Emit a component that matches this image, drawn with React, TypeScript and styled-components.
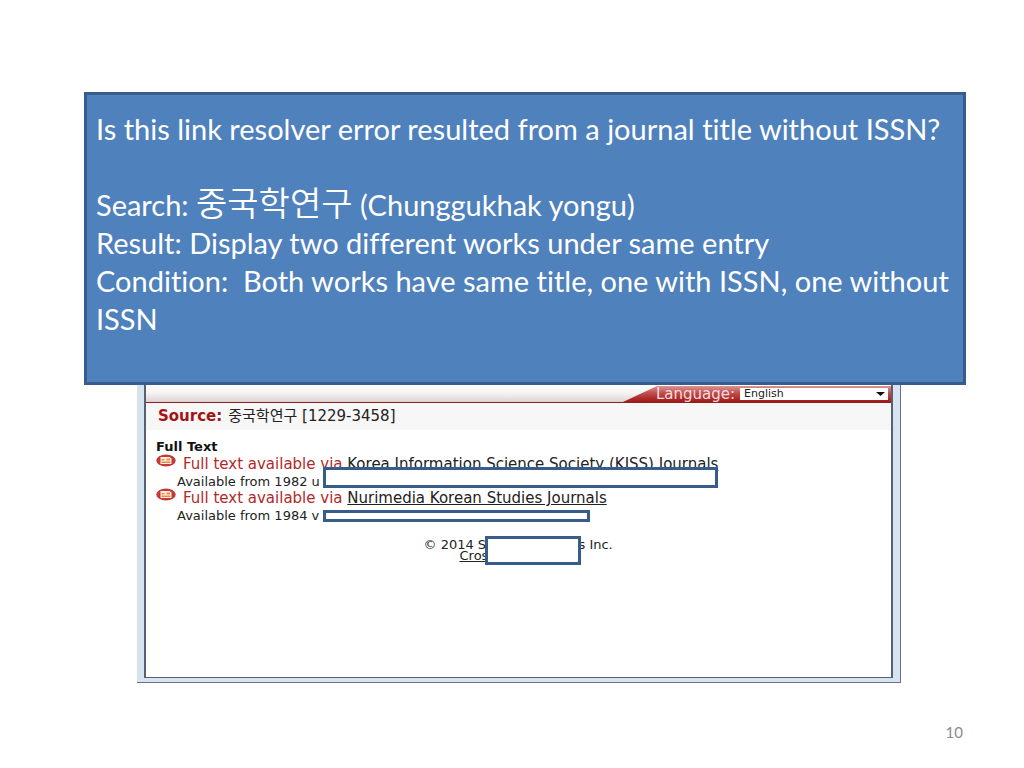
import React from "react";
import styled, { createGlobalStyle } from "styled-components";

const Global = createGlobalStyle`
  * { box-sizing: border-box; }
  body { margin: 0; background: #fff; }
  p, h1, h2 { margin: 0; }
`;

const Slide = styled.main`
  min-height: 100vh;
  padding: 92px 58px 25px 84px;
  display: flex;
  flex-direction: column;
  font-family: Lato, "Noto Sans CJK KR", sans-serif;
`;

const Callout = styled.section`
  min-height: 293px;
  padding: 15px 8px 30px 9px;
  border: 3px solid #385d8a;
  background: #4f81bd;
  color: #fff;
  font-size: 29px;
  font-variant-ligatures: none;
  line-height: 38px;
`;

const CalloutLine = styled.p`
  min-height: 38px;
  white-space: pre-wrap;
`;

const Hangul = styled.span`
  font-family: "Noto Sans CJK KR", sans-serif;
  font-size: 34px;
  font-weight: 350;
  line-height: 0;
`;

const Frame = styled.section`
  margin: 0 65px 0 53px;
  padding: 0 7px 4px;
  background: #d6e4f1;
  border: solid #6c7089;
  border-width: 0 1px 1px 0;
`;

const Page = styled.div`
  height: 293px;
  border: solid #59616e;
  border-width: 0 2px 1px;
  background: #fff;
  color: #222;
  font-family: "DejaVu Sans", "Noto Sans CJK KR", sans-serif;
`;

const TopBar = styled.header`
  height: 18px;
  padding-top: 1px;
  display: flex;
  justify-content: flex-end;
  border-bottom: 1px solid #8f2020;
  background: linear-gradient(#fff, #f5f1f1 50%, #ddd2d2);
`;

const LanguageTab = styled.label`
  width: 268px;
  padding: 0 3px 0 33px;
  display: flex;
  align-items: center;
  justify-content: space-between;
  background: linear-gradient(#dc9494, #c04c4c 45%, #a01818);
  clip-path: polygon(34px 0, 100% 0, 100% 100%, 0 100%);
  color: #f8dede;
  font-size: 15px;
  line-height: 16px;
`;

const SelectBox = styled.span`
  width: 148px;
  height: 12px;
  display: flex;
  align-items: center;
  background: #fff;
  padding-right: 3px;
`;

const Select = styled.select`
  flex: 1;
  height: 14px;
  padding: 0 4px;
  border: 0;
  appearance: none;
  background: transparent;
  color: #222;
  font: 11px/14px "DejaVu Sans", sans-serif;
`;

const Source = styled.h2`
  height: 27px;
  padding-left: 12px;
  background: #f7f7f7;
  font-size: 15px;
  font-weight: 400;
  line-height: 27px;
  white-space: nowrap;
`;

const SourceLabel = styled.strong`
  margin-right: 6px;
  color: #a31515;
`;

const Results = styled.div`
  padding: 10px 10px 0;
`;

const Heading = styled.h2`
  font-size: 13px;
  line-height: 14px;
  color: #111;
`;

const Entry = styled.article`
  position: relative;
  height: 34px;
  display: grid;
  grid-template-columns: 27px 1fr;
  grid-template-rows: 19px 15px;
  font-size: 15px;
  line-height: 17px;
  white-space: nowrap;

  svg { display: block; }
`;

const Via = styled.p`
  padding-top: 2px;
  color: #b02a2a;
`;

const TextLink = styled.a`
  color: #222;
  text-decoration: underline;
  text-underline-offset: 1px;
`;

const Dates = styled.p`
  grid-column: 1 / -1;
  padding-left: 21px;
  font-size: 13px;
`;

const Cover = styled.span<{ $x: number; $y: number; $w: number; $h: number }>`
  position: absolute;
  left: ${(p) => p.$x}px;
  top: ${(p) => p.$y}px;
  width: ${(p) => p.$w}px;
  height: ${(p) => p.$h}px;
  border: 3px solid #385d8a;
  background: #fff;
`;

const Footer = styled.footer`
  position: relative;
  width: 190px;
  margin: 17px auto 0;
  font-size: 13px;
  line-height: 11px;
  white-space: nowrap;
`;

const FooterLine = styled.p<{ $indent?: boolean }>`
  padding-left: ${(p) => (p.$indent ? 36 : 0)}px;
`;

const PageNumber = styled.p`
  margin-top: auto;
  padding-right: 3px;
  text-align: right;
  color: #8b8b8b;
  font-size: 15px;
  line-height: 22px;
`;

function ResultIcon() {
  return (
    <svg width="20" height="13" viewBox="0 0 20 13" aria-hidden="true">
      <ellipse cx="10" cy="6.500" rx="9.700" ry="6" fill="#c5393b" />
      <path d="M4.500 3h9l2 1.500v5.500h-11z" fill="#fff3e4" />
      <path d="M5.500 5h3v1.500h-3zM10.500 4.500h3.500v2h-3.500zM5.500 7.500h9v1.500h-9z" fill="#f08a3a" />
    </svg>
  );
}

export default function App() {
  return (
    <>
      <Global />
      <Slide>
        <Callout>
          <CalloutLine>Is this link resolver error resulted from a journal title without ISSN?</CalloutLine>
          <CalloutLine />
          <CalloutLine>
            Search: <Hangul lang="ko">중국학연구</Hangul> (Chunggukhak yongu)
          </CalloutLine>
          <CalloutLine>Result: Display two different works under same entry</CalloutLine>
          <CalloutLine>{"Condition:  Both works have same title, one with ISSN, one without ISSN"}</CalloutLine>
        </Callout>
        <Frame>
          <Page>
            <TopBar>
              <LanguageTab>
                Language:
                <SelectBox>
                  <Select defaultValue="English">
                    <option>English</option>
                  </Select>
                  <svg width="9" height="4" viewBox="0 0 9 4" aria-hidden="true">
                    <path d="M0 0h9L4.500 4z" fill="#111" />
                  </svg>
                </SelectBox>
              </LanguageTab>
            </TopBar>
            <Source>
              <SourceLabel>Source:</SourceLabel>
              <span lang="ko">중국학연구</span> [1229-3458]
            </Source>
            <Results>
              <Heading>Full Text</Heading>
              <Entry>
                <ResultIcon />
                <Via>
                  Full text available via <TextLink href="#kiss">Korea Information Science Society (KISS) Journals</TextLink>
                </Via>
                <Dates>Available from 1982 u</Dates>
                <Cover $x={167} $y={13} $w={395} $h={21} />
              </Entry>
              <Entry>
                <ResultIcon />
                <Via>
                  Full text available via <TextLink href="#nurimedia">Nurimedia Korean Studies Journals</TextLink>
                </Via>
                <Dates>Available from 1984 v</Dates>
                <Cover $x={167} $y={22} $w={267} $h={12} />
              </Entry>
              <Footer>
                <FooterLine>© 2014 Serials Solutions Inc.</FooterLine>
                <FooterLine $indent>
                  <TextLink href="#cross">Cros</TextLink>
                </FooterLine>
                <Cover $x={61} $y={-3} $w={96} $h={29} />
              </Footer>
            </Results>
          </Page>
        </Frame>
        <PageNumber>10</PageNumber>
      </Slide>
    </>
  );
}
